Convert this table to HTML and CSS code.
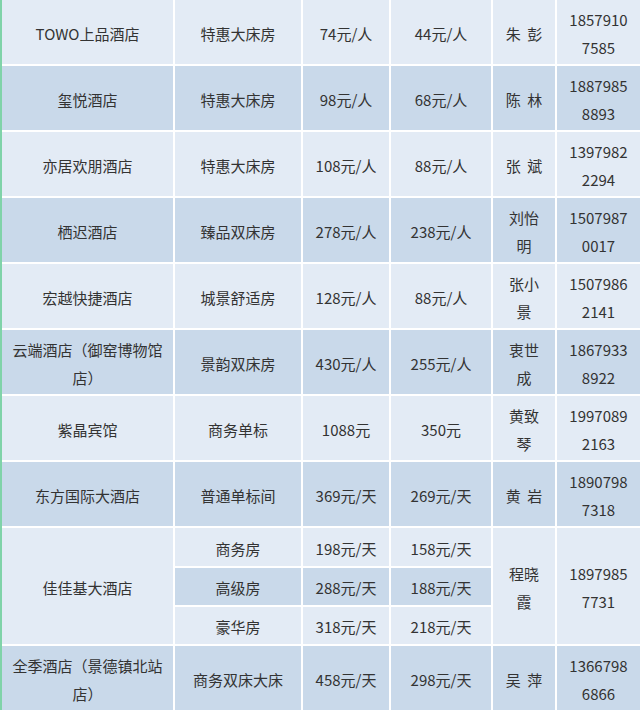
FILE: index.html
```html
<!DOCTYPE html>
<html lang="zh-CN">
<head>
<meta charset="utf-8">
<title>酒店价格表</title>
<link rel="stylesheet" href="styles.css">
</head>
<body>
<div class="sheet">
  <div class="cell light">TOWO上品酒店</div>
  <div class="cell light">特惠大床房</div>
  <div class="cell light">74元/人</div>
  <div class="cell light">44元/人</div>
  <div class="cell light name">朱 彭</div>
  <div class="cell light phone">18579107585</div>

  <div class="cell dark">玺悦酒店</div>
  <div class="cell dark">特惠大床房</div>
  <div class="cell dark">98元/人</div>
  <div class="cell dark">68元/人</div>
  <div class="cell dark name">陈 林</div>
  <div class="cell dark phone">18879858893</div>

  <div class="cell light">亦居欢朋酒店</div>
  <div class="cell light">特惠大床房</div>
  <div class="cell light">108元/人</div>
  <div class="cell light">88元/人</div>
  <div class="cell light name">张 斌</div>
  <div class="cell light phone">13979822294</div>

  <div class="cell dark">栖迟酒店</div>
  <div class="cell dark">臻品双床房</div>
  <div class="cell dark">278元/人</div>
  <div class="cell dark">238元/人</div>
  <div class="cell dark name">刘怡明</div>
  <div class="cell dark phone">15079870017</div>

  <div class="cell light">宏越快捷酒店</div>
  <div class="cell light">城景舒适房</div>
  <div class="cell light">128元/人</div>
  <div class="cell light">88元/人</div>
  <div class="cell light name">张小景</div>
  <div class="cell light phone">15079862141</div>

  <div class="cell dark">云端酒店（御窑博物馆店）</div>
  <div class="cell dark">景韵双床房</div>
  <div class="cell dark">430元/人</div>
  <div class="cell dark">255元/人</div>
  <div class="cell dark name">衷世成</div>
  <div class="cell dark phone">18679338922</div>

  <div class="cell light">紫晶宾馆</div>
  <div class="cell light">商务单标</div>
  <div class="cell light">1088元</div>
  <div class="cell light">350元</div>
  <div class="cell light name">黄致琴</div>
  <div class="cell light phone">19970892163</div>

  <div class="cell dark">东方国际大酒店</div>
  <div class="cell dark">普通单标间</div>
  <div class="cell dark">369元/天</div>
  <div class="cell dark">269元/天</div>
  <div class="cell dark name">黄 岩</div>
  <div class="cell dark phone">18907987318</div>

  <div class="cell light span3">佳佳基大酒店</div>
  <div class="cell light">商务房</div>
  <div class="cell light">198元/天</div>
  <div class="cell light">158元/天</div>
  <div class="cell light name span3">程晓霞</div>
  <div class="cell light phone span3">18979857731</div>
  <div class="cell dark">高级房</div>
  <div class="cell dark">288元/天</div>
  <div class="cell dark">188元/天</div>
  <div class="cell light">豪华房</div>
  <div class="cell light">318元/天</div>
  <div class="cell light">218元/天</div>

  <div class="cell dark">全季酒店（景德镇北站店）</div>
  <div class="cell dark">商务双床大床</div>
  <div class="cell dark">458元/天</div>
  <div class="cell dark">298元/天</div>
  <div class="cell dark name">吴 萍</div>
  <div class="cell dark phone">13667986866</div>
</div>
</body>
</html>
```

FILE: styles.css
```css
html, body {
  margin: 0;
  padding: 0;
  background: #ffffff;
}

body {
  font-family: "Noto Sans CJK SC", "Noto Sans", sans-serif;
  font-size: 15px;
  color: #333333;
}

.sheet {
  display: grid;
  grid-template-columns: 171px 126px 86px 100px 62px 1fr;
  grid-template-rows: repeat(8, 64px) 38px 37px 37px 64px;
  gap: 2px;
  border-left: 2px solid #80d3a9;
  background: #ffffff;
  width: 638px;
}

.cell {
  display: grid;
  place-items: center;
  text-align: center;
  padding: 3px 10px 0;
  line-height: 28px;
  word-break: break-all;
}

.light {
  background: #e3ebf5;
}

.dark {
  background: #c9d9ea;
}

.name {
  word-spacing: 3px;
}

.span3 {
  grid-row: span 3;
}
```
